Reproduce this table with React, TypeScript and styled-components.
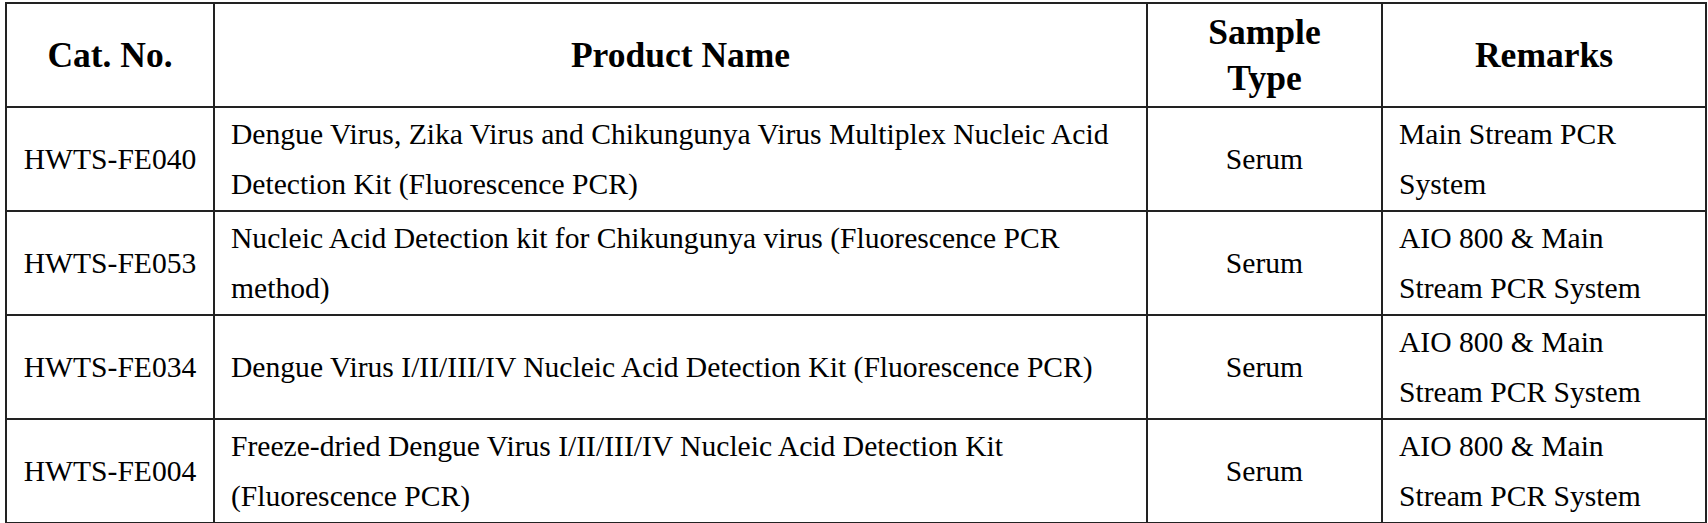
import React from "react";
import styled, { createGlobalStyle } from "styled-components";

interface Product {
    cat: string;
    name: string;
    sample: string;
    remarks: string;
}

const products: Product[] = [
    {
        cat: "HWTS-FE040",
        name: "Dengue Virus, Zika Virus and Chikungunya Virus Multiplex Nucleic Acid Detection Kit (Fluorescence PCR)",
        sample: "Serum",
        remarks: "Main Stream PCR System",
    },
    {
        cat: "HWTS-FE053",
        name: "Nucleic Acid Detection kit for Chikungunya virus (Fluorescence PCR method)",
        sample: "Serum",
        remarks: "AIO 800 & Main Stream PCR System",
    },
    {
        cat: "HWTS-FE034",
        name: "Dengue Virus I/II/III/IV Nucleic Acid Detection Kit (Fluorescence PCR)",
        sample: "Serum",
        remarks: "AIO 800 & Main Stream PCR System",
    },
    {
        cat: "HWTS-FE004",
        name: "Freeze-dried Dengue Virus I/II/III/IV Nucleic Acid Detection Kit (Fluorescence PCR)",
        sample: "Serum",
        remarks: "AIO 800 & Main Stream PCR System",
    },
];

const GlobalStyle = createGlobalStyle`
    html, body {
        margin: 0;
        padding: 0;
        background: #ffffff;
    }
`;

const Page = styled.div`
    padding: 2px 3px 0 5px;
    font-family: "Liberation Serif", "Times New Roman", serif;
    color: #000;
`;

const Table = styled.table`
    width: 1700px;
    border-collapse: collapse;
    table-layout: fixed;
    border: 2px solid #222;
`;

const HeadRow = styled.tr`
    height: 104px;
`;

const Row = styled.tr`
    height: 104px;
`;

const Th = styled.th`
    border: 2px solid #222;
    font-size: 35.5px;
    font-weight: bold;
    line-height: 46px;
    text-align: center;
    vertical-align: middle;
    padding: 0 24px;
`;

const Td = styled.td<{ $align?: "left" | "center"; $padRight?: number }>`
    border: 2px solid #222;
    font-size: 29.6px;
    line-height: 50px;
    text-align: ${(p) => p.$align || "left"};
    vertical-align: middle;
    padding: 0 ${(p) => p.$padRight ?? 10}px 0 ${(p) => (p.$align === "center" ? 10 : 16)}px;
`;

export default function App() {
    return (
        <Page>
            <GlobalStyle />
            <Table>
                <colgroup>
                    <col style={{ width: 208 }} />
                    <col style={{ width: 933 }} />
                    <col style={{ width: 235 }} />
                    <col style={{ width: 324 }} />
                </colgroup>
                <thead>
                    <HeadRow>
                        <Th>Cat. No.</Th>
                        <Th>Product Name</Th>
                        <Th>Sample Type</Th>
                        <Th>Remarks</Th>
                    </HeadRow>
                </thead>
                <tbody>
                    {products.map((p) => (
                        <Row key={p.cat}>
                            <Td $align="center">{p.cat}</Td>
                            <Td>{p.name}</Td>
                            <Td $align="center">{p.sample}</Td>
                            <Td $padRight={30}>{p.remarks}</Td>
                        </Row>
                    ))}
                </tbody>
            </Table>
        </Page>
    );
}
